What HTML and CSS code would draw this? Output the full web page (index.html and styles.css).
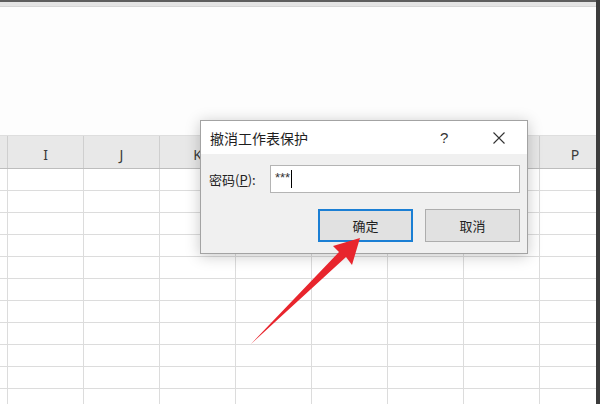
FILE: index.html
```html
<!DOCTYPE html>
<html lang="zh-CN">
<head>
    <meta charset="UTF-8">
    <title>撤消工作表保护</title>
    <link rel="stylesheet" href="styles.css">
</head>
<body>
    <div class="window">
        <div class="sheet-area">
            <div class="top-bar"></div>
            <div class="blank-area"></div>

            <!-- 列标题 -->
            <div class="grid header-row">
                <div class="col-head"></div>
                <div class="col-head">I</div>
                <div class="col-head">J</div>
                <div class="col-head">K</div>
                <div class="col-head">L</div>
                <div class="col-head">M</div>
                <div class="col-head">N</div>
                <div class="col-head">O</div>
                <div class="col-head">P</div>
            </div>

            <div class="grid cells" id="cells"></div>
        </div>
        <div class="right-edge"></div>
    </div>

    <!-- 对话框 -->
    <div class="dialog">
        <div class="dialog-title">
            <span class="title-text">撤消工作表保护</span>
            <span class="title-help">?</span>
            <span class="title-close">
                <svg width="12" height="12" viewBox="0 0 12 12">
                    <path d="M0.5 0.5 L11.5 11.5 M11.5 0.5 L0.5 11.5" stroke="#333" stroke-width="1.1" fill="none"/>
                </svg>
            </span>
        </div>
        <div class="dialog-body">
            <div class="field-row">
                <label class="field-label">密码(<u>P</u>):</label>
                <div class="field-input"><span class="stars">***</span><span class="caret"></span></div>
            </div>
            <div class="button-row">
                <button class="dlg-button default">确定</button>
                <button class="dlg-button">取消</button>
            </div>
        </div>
    </div>

    <svg class="arrow" width="600" height="404" viewBox="0 0 600 404">
        <polygon points="360,238 333,246 339,252 251,344 346,257 352,265" fill="#e8252d"/>
    </svg>

    <script>
        const cells = document.getElementById('cells');
        for (let r = 0; r < 11; r++) {
            for (let c = 0; c < 9; c++) {
                const cell = document.createElement('div');
                cell.className = 'cell';
                cells.appendChild(cell);
            }
        }
    </script>
</body>
</html>
```

FILE: styles.css
```css
* {
    box-sizing: border-box;
}
body {
    margin: 0;
    width: 600px;
    height: 404px;
    overflow: hidden;
    background-color: #fff;
    font-family: "Noto Sans CJK SC", "Noto Sans", sans-serif;
    position: relative;
}
.window {
    display: flex;
    height: 404px;
}
.sheet-area {
    flex: 1;
    display: flex;
    flex-direction: column;
    overflow: hidden;
}
.sheet-area > div {
    flex-shrink: 0;
}
.right-edge {
    width: 4px;
    background-color: #3c3c3c;
}
.top-bar {
    height: 7px;
    border-top: 2px solid #5e5e5e;
    background-color: #e4e4e4;
    border-bottom: 1px solid #d6d6d6;
}
.blank-area {
    height: 128px;
    background-color: #fdfdfd;
}
.grid {
    display: grid;
    grid-template-columns: 8px repeat(7, 76px) 1fr;
}
.header-row {
    height: 34px;
    background-color: #e8e8e8;
    border-top: 1px solid #dedede;
    border-bottom: 1px solid #bdbdbd;
}
.col-head {
    border-right: 1px solid #cfcfcf;
    display: flex;
    align-items: center;
    justify-content: center;
    padding-top: 4px;
    font-family: "Noto Sans", "Liberation Sans", sans-serif;
    font-size: 14px;
    color: #3a3a3a;
}
.col-head:last-child {
    border-right: none;
    padding-left: 14px;
}
.cell {
    height: 22px;
    border-right: 1px solid #dcdcdc;
    border-bottom: 1px solid #dcdcdc;
}
.cell:nth-child(9n) {
    border-right: none;
}

/* 对话框 */
.dialog {
    position: absolute;
    left: 200px;
    top: 120px;
    width: 328px;
    height: 134px;
    border: 1px solid #a3a3a3;
    background-color: #f0f0f0;
    box-shadow: 0 2px 14px rgba(0, 0, 0, 0.22);
    display: flex;
    flex-direction: column;
}
.dialog-title {
    height: 33px;
    background-color: #fff;
    display: flex;
    align-items: center;
    padding-left: 9px;
}
.title-text {
    font-size: 14px;
    color: #1e1e1e;
    flex: 1;
}
.title-help {
    font-family: "Liberation Sans", sans-serif;
    font-size: 15px;
    color: #333;
    width: 14px;
    margin-right: 39px;
}
.title-close {
    width: 12px;
    height: 12px;
    margin-right: 22px;
    display: flex;
}
.dialog-body {
    flex: 1;
    padding: 11px 7px 0 8px;
}
.field-row {
    display: flex;
    align-items: center;
    gap: 9px;
}
.field-label {
    font-size: 13px;
    color: #222;
    width: 52px;
}
.field-input {
    flex: 1;
    height: 28px;
    background-color: #fff;
    border: 1px solid #b4b4b4;
    display: flex;
    align-items: center;
    padding-left: 4px;
}
.stars {
    font-family: "Liberation Sans", sans-serif;
    font-size: 13px;
    color: #333;
    position: relative;
    top: -2px;
}
.caret {
    width: 1px;
    height: 18px;
    background-color: #000;
    margin-left: 1px;
}
.button-row {
    display: flex;
    justify-content: flex-end;
    gap: 12px;
    margin-top: 16px;
}
.dlg-button {
    width: 95px;
    height: 33px;
    background-color: #e1e1e1;
    border: 1px solid #adadad;
    font-family: "Noto Sans CJK SC", sans-serif;
    font-size: 13px;
    color: #1e1e1e;
    padding: 0;
}
.dlg-button.default {
    border: 2px solid #1b7fd4;
}
.arrow {
    position: absolute;
    left: 0;
    top: 0;
    pointer-events: none;
}
```
